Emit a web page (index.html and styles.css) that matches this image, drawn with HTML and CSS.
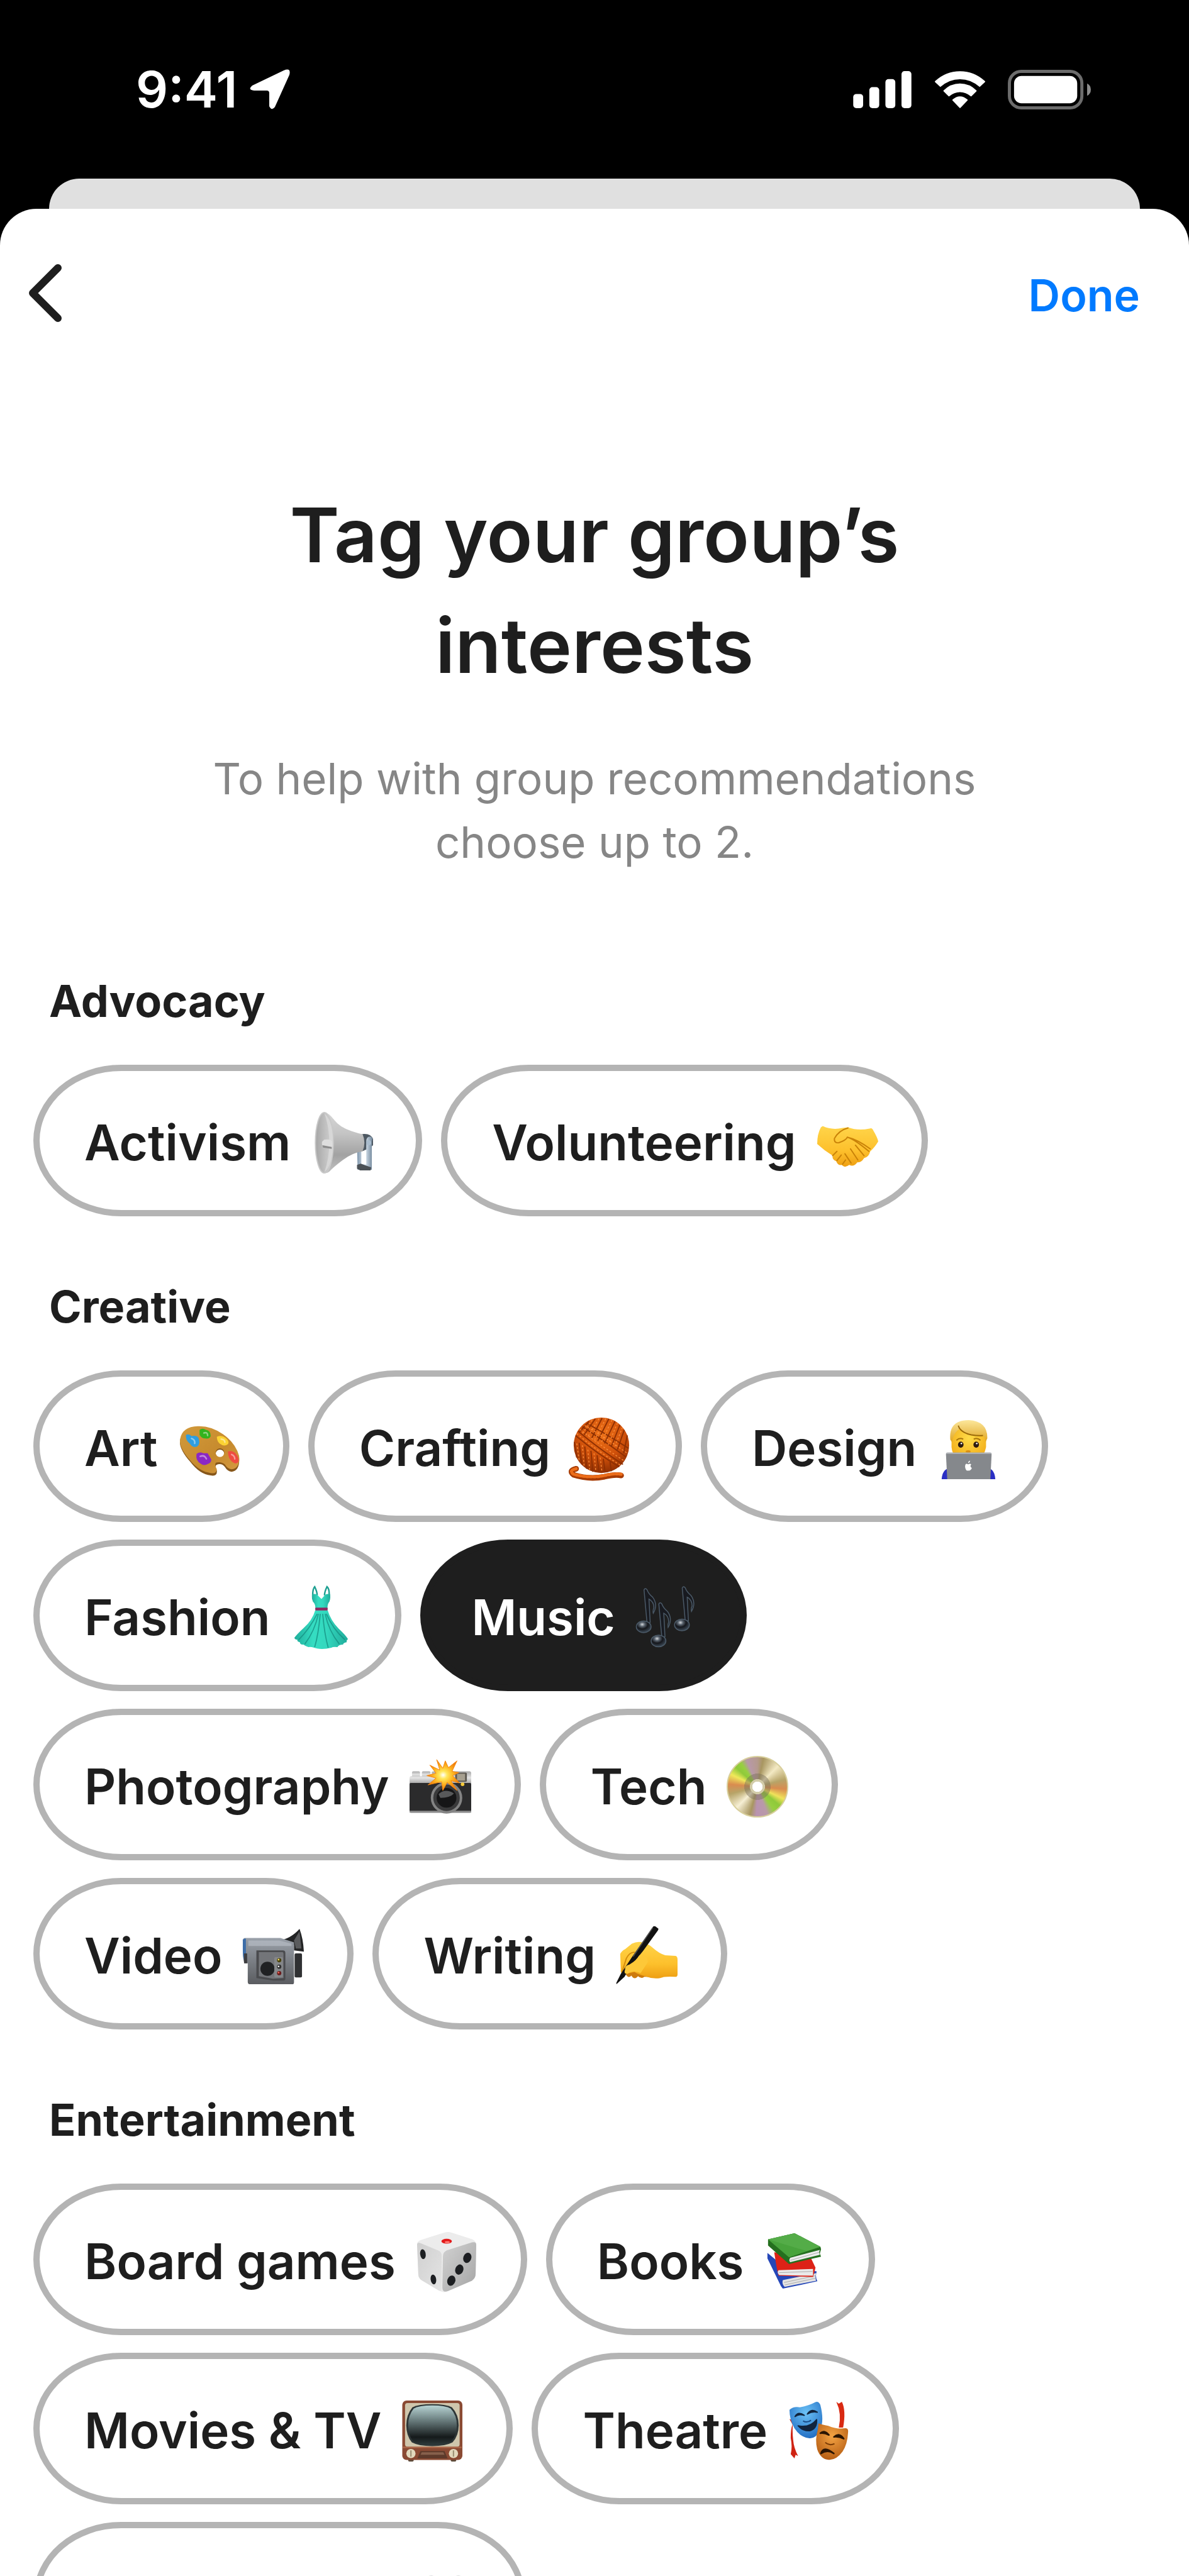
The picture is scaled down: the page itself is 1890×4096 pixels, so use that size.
FILE: index.html
```html
<!DOCTYPE html>
<html lang="en">
<head>
    <meta charset="UTF-8">
    <meta name="viewport" content="width=device-width, initial-scale=1.0">
    <title>Tag your group’s interests</title>
    <link rel="stylesheet" href="styles.css">
</head>
<body>

<div class="status-bar">
    <div class="status-left">
        <span class="time">9:41</span>
        <svg class="location" viewBox="0 0 64 64" aria-hidden="true"><path fill="#fff" d="M4 26 54 2Q66-3 63 9L40 60Q35 67 31 59V38Q31 34 27 34H7Q-4 33 4 26Z"/></svg>
    </div>
    <div class="status-right">
        <svg class="signal" viewBox="0 0 95 61" aria-hidden="true">
            <g fill="#fff">
                <rect x="0" y="38" width="16" height="23" rx="5"/>
                <rect x="26" y="27" width="16" height="34" rx="5"/>
                <rect x="52" y="14" width="16" height="47" rx="5"/>
                <rect x="78" y="1" width="16" height="60" rx="5"/>
            </g>
        </svg>
        <svg class="wifi" viewBox="0 0 84 61" aria-hidden="true">
            <g fill="#fff" stroke="#fff" stroke-width="2" stroke-linejoin="round">
                <path d="M2 18Q19 2 42 2T82 18L74 25.500Q60 13 42 13T10 25.500Z"/>
                <path d="M16 33Q27 22 42 22T68 33L60 41Q52 34 42 34T24 41Z"/>
                <path d="M30.500 48Q36 43 42 43T53.500 48L42 60Z"/>
            </g>
        </svg>
        <svg class="battery" viewBox="0 0 134 64" aria-hidden="true">
            <rect x="2.500" y="2.500" width="117" height="59" rx="19" fill="none" stroke="#6c6c6c" stroke-width="5"/>
            <rect x="10" y="10" width="102" height="44" rx="12" fill="#fff"/>
            <path d="M128 22Q134 25 134 32T128 42Z" fill="#8c8c8c"/>
        </svg>
    </div>
</div>

<div class="back-card"></div>

<main class="sheet">
    <nav class="nav">
        <button class="back" type="button" aria-label="Back">
            <svg viewBox="0 0 52 92" aria-hidden="true"><path d="M46 6 6 46 46 86" fill="none" stroke="#1e1e1e" stroke-width="12" stroke-linecap="round" stroke-linejoin="round"/></svg>
        </button>
        <button class="done" type="button">Done</button>
    </nav>

    <h1>Tag your group’s<br>interests</h1>
    <p class="intro">To help with group recommendations<br>choose up to 2.</p>

    <section>
        <h2>Advocacy</h2>
        <div class="chips">
            <button class="chip" type="button" aria-pressed="false">Activism
                <svg class="emoji" viewBox="0 0 100 100" aria-hidden="true">
                    <defs>
                        <linearGradient id="horn" x1="0" y1="0" x2="0" y2="1"><stop offset="0" stop-color="#d6d6d6"/><stop offset=".35" stop-color="#c4c4c4"/><stop offset=".7" stop-color="#a2a2a2"/><stop offset="1" stop-color="#c2c2c2"/></linearGradient>
                        <linearGradient id="bell" x1="0" y1="0" x2="1" y2="0"><stop offset="0" stop-color="#a5a5a5"/><stop offset=".5" stop-color="#bebebe"/><stop offset="1" stop-color="#d2d2d2"/></linearGradient>
                        <linearGradient id="steel" x1="0" y1="0" x2="1" y2="0"><stop offset="0" stop-color="#7d94aa"/><stop offset=".5" stop-color="#dfeaf4"/><stop offset="1" stop-color="#71879b"/></linearGradient>
                    </defs>
                    <path d="M83 36Q97 34 101 44V54L95 59 83 64Z" fill="#4d5862"/>
                    <path d="M75 55H82V85H90V48Q90 40 96 40T99 48V94H76Z" fill="url(#steel)"/>
                    <path d="M75 86 81 84 98 90 97 95H80L75 92Z" fill="#4b5156"/>
                    <circle cx="94" cy="50" r="4" fill="#a9bccd"/>
                    <path d="M22 1Q29 1 38 13T66 31Q78 35 84 36Q90 50 84 64Q68 66 52 78T30 97Q26 100 22 99Z" fill="url(#horn)"/>
                    <ellipse cx="22" cy="50" rx="14.500" ry="49" fill="url(#bell)" stroke="#c9c9c9" stroke-width="2"/>
                    <path d="M22 2Q36 14 36 50T22 98Q30 75 30 50T22 2Z" fill="#dadada" opacity=".8"/>
                    <path d="M22 45Q34 43 35 50T34 58L20 56Q15 50 22 45Z" fill="#dedede"/>
                    <path d="M19 54 34 57V60L20 58Z" fill="#8c8c8c"/>
                </svg>
            </button>
            <button class="chip" type="button" aria-pressed="false">Volunteering
                <svg class="emoji" viewBox="0 0 100 100" aria-hidden="true">
                    <defs><linearGradient id="skin" x1="0" y1="0" x2="0" y2="1"><stop offset="0" stop-color="#ffd54a"/><stop offset=".6" stop-color="#fdc02c"/><stop offset="1" stop-color="#ee9f13"/></linearGradient></defs>
                    <path d="M10 23Q25 30 42 26L51 25Q67 31 86 27Q90 25 92 30Q99 42 100 48Q94 58 87 64Q85 73 77 75Q73 82 66 82Q60 90 53 86Q45 92 41 86Q34 87 32 80Q25 78 26 71Q13 63 1 52Q1 36 7 25Z" fill="url(#skin)"/>
                    <path d="M51 26Q36 30 29 43Q28 51 36 50Q48 46 50 41Q61 44 85 64M63 54 77 71M55 60 67 78M46 68 56 83M26 71 33 64M33 79 40 70M42 85 47 78M50 41Q67 45 87 60" fill="none" stroke="#c98208" stroke-width="2" stroke-linecap="round"/>
                </svg>
            </button>
        </div>
    </section>

    <section>
        <h2>Creative</h2>
        <div class="chips">
            <button class="chip" type="button" aria-pressed="false">Art
                <svg class="emoji" viewBox="0 0 100 100" aria-hidden="true">
                    <defs><linearGradient id="wood" x1="0" y1="0" x2="1" y2="1"><stop offset="0" stop-color="#d29a3c"/><stop offset=".6" stop-color="#c68a2d"/><stop offset="1" stop-color="#d69b42"/></linearGradient></defs>
                    <path d="M3 39Q4 15 32 15Q53 13 73 27Q93 41 99 62Q101 84 87 86Q80 85 76 78Q70 71 62 75Q59 78 63 84Q64 94 53 92Q35 90 20 70Q4 52 3 39ZM68 50A7 7 0 1 0 68 64A7 7 0 1 0 68 50Z" transform="translate(0 2)" fill="#87571a" fill-rule="evenodd"/>
                    <path d="M3 39Q4 15 32 14Q53 13 73 27Q93 41 99 62Q101 82 87 84Q80 83 76 76Q70 71 62 73Q58 76 63 84Q62 92 53 90Q35 88 20 70Q4 52 3 39ZM68 50A7 7 0 1 0 68 64A7 7 0 1 0 68 50Z" fill="url(#wood)" fill-rule="evenodd"/>
                    <path d="M35 20Q40 16 45 20Q53 21 53 30Q51 35 45 34Q38 34 35 28Z" fill="#32b31d"/>
                    <path d="M13 28Q18 26 22 30Q33 28 34 36Q36 43 31 47Q24 50 19 42Q12 37 13 28Z" fill="#2f9ee0"/>
                    <path d="M63 31Q71 28 77 33Q84 39 81 43Q75 48 69 43Q63 40 63 31Z" fill="#fbd233"/>
                    <path d="M30 59Q35 55 41 58L48 58 54 68Q54 73 49 75Q42 79 37 75Q28 70 30 59Z" fill="#8b27c4"/>
                    <path d="M81 55Q88 53 93 58Q100 66 98 72Q94 77 88 72Q81 66 81 55Z" fill="#ef4b41"/>
                    <path d="M42 25Q48 23 48 29M22 34Q28 36 27 42M70 35Q76 36 76 40M36 63Q43 60 46 67M87 60Q92 62 92 67" fill="none" stroke="#fff" stroke-opacity=".45" stroke-width="2.500" stroke-linecap="round"/>
                </svg>
            </button>
            <button class="chip" type="button" aria-pressed="false">Crafting
                <svg class="emoji" viewBox="0 0 100 100" aria-hidden="true">
                    <defs><radialGradient id="yarn" cx=".5" cy=".3" r=".7"><stop offset="0" stop-color="#ee7218"/><stop offset=".6" stop-color="#cf500a"/><stop offset="1" stop-color="#8f2f02"/></radialGradient></defs>
                    <path d="M9 83Q-4 86 5 93Q30 101 55 96Q72 92 82 94" fill="none" stroke="#a63b04" stroke-width="9" stroke-linecap="round"/>
                    <path d="M9 83Q-4 86 5 92Q30 99 55 94Q72 90 82 92" fill="none" stroke="#ec6d1a" stroke-width="5" stroke-linecap="round" stroke-dasharray="3 3"/>
                    <ellipse cx="50" cy="45" rx="45" ry="45" fill="url(#yarn)"/>
                    <g fill="none" stroke="#8e3003" stroke-width="2">
                        <path d="M12 22Q45 50 85 76M8 29Q42 58 79 80M19 15Q52 36 90 64M26 9Q60 28 94 50"/>
                        <path d="M30 6 14 24M40 2 22 28M51 1 34 34M62 2 44 38M72 6 55 42M80 12 66 47M87 20 76 52M92 29 86 58"/>
                        <path d="M6 40 10 65M14 41 18 76M23 47 26 83M33 54 36 88M43 61 46 89M53 67 56 89M64 72 66 87"/>
                    </g>
                    <g fill="none" stroke="#f98a38" stroke-width="1.500" stroke-dasharray="3 3">
                        <path d="M15 19Q48 45 88 71M10 26Q44 55 82 78M23 13Q56 32 92 58"/>
                        <path d="M35 4 18 27M46 2 28 31M57 2 39 36M67 4 50 40M76 9 61 44M84 16 71 49M10 42 14 70M19 45 22 79M28 52 31 85M38 58 41 88M48 65 51 89"/>
                    </g>
                </svg>
            </button>
            <button class="chip" type="button" aria-pressed="false">Design
                <svg class="emoji" viewBox="0 0 100 100" aria-hidden="true">
                    <defs>
                        <linearGradient id="hair" x1="0" y1="0" x2="0" y2="1"><stop offset="0" stop-color="#fce79c"/><stop offset="1" stop-color="#dfa41f"/></linearGradient>
                        <radialGradient id="face" cx=".5" cy=".4" r=".6"><stop offset="0" stop-color="#ffdc48"/><stop offset="1" stop-color="#f3b01c"/></radialGradient>
                    </defs>
                    <path d="M8 100Q9 85 20 82H84Q94 85 95 100Z" fill="#2a2fc4"/>
                    <path d="M24 30Q24 10 51 10T80 30V48Q77 62 70 68H34Q25 60 24 48Z" fill="url(#face)"/>
                    <path d="M22 36Q19 4 52 4Q83 6 82 34L79 40Q79 31 74 29Q54 32 38 18Q27 24 25 40Z" fill="url(#hair)"/>
                    <path d="M35 13Q38 24 56 28Q67 30 75 29" fill="none" stroke="#9b6a0a" stroke-width="2"/>
                    <ellipse cx="39" cy="44" rx="4.500" ry="5" fill="#2d1b10"/><ellipse cx="64" cy="44" rx="4.500" ry="5" fill="#2d1b10"/>
                    <circle cx="40" cy="42" r="1.300" fill="#fff"/><circle cx="65" cy="42" r="1.300" fill="#fff"/>
                    <path d="M32 37Q37 32 43 35M60 35Q66 32 71 37" fill="none" stroke="#a8750c" stroke-width="2"/>
                    <ellipse cx="51" cy="55" rx="4" ry="2" fill="#d98e12"/>
                    <path d="M17 57H87Q89 57 89 60L87 100H17L15 60Q15 57 17 57Z" fill="#85888c"/>
                    <path d="M17 57H87Q89 57 89 59H15Q15 57 17 57Z" fill="#b3b6ba"/>
                    <path d="M51 76Q46 73 46 80Q47 87 51 86Q55 87 57 82Q53 79 56 76Q54 74 51 76ZM51 74Q51 71 54 70Q54 73 51 74Z" fill="#fff"/>
                </svg>
            </button>
            <button class="chip" type="button" aria-pressed="false">Fashion
                <svg class="emoji" viewBox="0 0 100 100" aria-hidden="true">
                    <defs><linearGradient id="dress" x1="0" y1="0" x2="1" y2="0"><stop offset="0" stop-color="#1fae9b"/><stop offset=".35" stop-color="#35ddc2"/><stop offset=".6" stop-color="#33d8be"/><stop offset="1" stop-color="#20ac9b"/></linearGradient></defs>
                    <path d="M37 20Q36 4 40 0Q44 8 44 14M63 20Q65 4 60 0Q56 8 56 14" fill="none" stroke="#1c9f91" stroke-width="2.500"/>
                    <path d="M36 12Q42 11 44 13L51 20 57 13Q60 11 65 12Q66 19 64 24Q60 29 61 36H41Q42 29 37 24Q35 19 36 12Z" fill="url(#dress)"/>
                    <path d="M41 38H61Q66 55 79 68Q90 78 94 85Q91 87 92 90Q86 91 86 94Q79 94 77 98Q70 97 67 99Q59 101 52 101Q44 101 39 99Q33 97 30 98Q24 96 22 94Q16 94 16 90Q11 89 12 86Q8 86 7 83Q11 77 22 67Q36 55 41 38Z" fill="url(#dress)"/>
                    <path d="M46 44Q40 72 24 93M49 44Q46 78 40 98M53 44Q56 78 62 99M57 44Q63 72 80 93M44 44Q32 68 14 86M59 44Q69 68 89 86" fill="none" stroke="#158d80" stroke-width="1.800" opacity=".75"/>
                    <rect x="41" y="34" width="20" height="4.500" rx="1" fill="#8c2860"/>
                </svg>
            </button>
            <button class="chip selected" type="button" aria-pressed="true">Music
                <svg class="emoji" viewBox="0 0 100 100" aria-hidden="true">
                    <defs>
                        <radialGradient id="head" cx=".4" cy=".3" r=".7"><stop offset="0" stop-color="#d7dade"/><stop offset=".25" stop-color="#59636e"/><stop offset=".55" stop-color="#14161b"/><stop offset="1" stop-color="#3d4a57"/></radialGradient>
                        <g id="note">
                            <path d="M14 5Q16 1 19 5Q21 11 28 17Q37 29 29 43Q28 39 30 34Q30 24 22 20L24 58 19 60Z" fill="#181a20" stroke="#4b5a68" stroke-width="1.500"/>
                            <ellipse cx="13.500" cy="65" rx="12" ry="9.500" fill="url(#head)" stroke="#4b5a68" stroke-width="1.500"/>
                        </g>
                    </defs>
                    <use href="#note"/>
                    <use href="#note" x="62" y="-3"/>
                    <use href="#note" x="24" y="23"/>
                </svg>
            </button>
            <button class="chip" type="button" aria-pressed="false">Photography
                <svg class="emoji" viewBox="0 0 100 100" aria-hidden="true">
                    <defs>
                        <linearGradient id="chrome" x1="0" y1="0" x2="0" y2="1"><stop offset="0" stop-color="#a9a9a9"/><stop offset=".5" stop-color="#e4e4e4"/><stop offset="1" stop-color="#9e9e9e"/></linearGradient>
                        <radialGradient id="flash"><stop offset="0" stop-color="#fff"/><stop offset=".25" stop-color="#ffe75a"/><stop offset=".6" stop-color="#fdb521"/><stop offset="1" stop-color="#f07c0c"/></radialGradient>
                    </defs>
                    <rect x="4" y="25" width="13" height="11" rx="2" fill="url(#chrome)"/>
                    <rect x="20" y="25" width="14" height="11" rx="2" fill="url(#chrome)"/>
                    <path d="M0 36Q0 33 3 33H36V27Q36 25 40 25H97Q100 25 100 28V46H0Z" fill="url(#chrome)"/>
                    <rect x="0" y="44" width="100" height="48" rx="2" fill="#2b2b2c"/>
                    <rect x="0" y="89" width="100" height="3" fill="#8d8d8d"/>
                    <rect x="74" y="27" width="19" height="15" rx="2" fill="#5e5a52"/>
                    <rect x="77" y="29" width="13" height="11" fill="#a69f8f"/>
                    <circle cx="60" cy="68" r="25.500" fill="#848484"/>
                    <circle cx="60" cy="68" r="21.500" fill="#3a3a3b"/>
                    <circle cx="60" cy="68" r="16" fill="#161617"/>
                    <path d="M47 62Q58 52 72 61Q66 68 50 68Z" fill="#6f7072" opacity=".75"/>
                    <circle cx="86" cy="46" r="3" fill="#f4c93b"/>
                    <path d="M44 6 54 20 58 8 63 19 77 8 69 25 80 27 70 32 81 44 67 40 77 56 61 43 54 56 52 42 30 47 43 36 28 32 43 28 33 15 49 23Z" fill="url(#flash)" stroke="#f5870f" stroke-width="1"/>
                </svg>
            </button>
            <button class="chip" type="button" aria-pressed="false">Tech
                <span class="emoji disc" aria-hidden="true"></span>
            </button>
            <button class="chip" type="button" aria-pressed="false">Video
                <svg class="emoji" viewBox="0 0 100 100" aria-hidden="true">
                    <defs><linearGradient id="cam" x1="0" y1="0" x2="0" y2="1"><stop offset="0" stop-color="#9aa1aa"/><stop offset=".3" stop-color="#878c93"/><stop offset="1" stop-color="#5a5c60"/></linearGradient></defs>
                    <path d="M58 25Q78 23 93 6Q99 22 100 43L84 41V32Z" fill="#232425"/>
                    <path d="M84 25 93 10 96 38 87 38Z" fill="#5a5b5d"/>
                    <rect x="85" y="46" width="12" height="39" rx="2" fill="#303133"/>
                    <path d="M4 21H62L84 28V93Q84 96 81 96H13Q9 96 9 92V62H4Q1 58 1 40V24Q2 21 4 21Z" fill="url(#cam)"/>
                    <path d="M3 22H6V61Q1 58 1 40V24Z" fill="#3d6da8"/>
                    <rect x="3" y="46" width="5" height="16" fill="#3c3c3f"/>
                    <path d="M10 25H60L80 30V34H10Z" fill="#b5bbc3" opacity=".7"/>
                    <path d="M23 41H66Q70 41 70 45V87Q70 90 67 90H50L23 86Z" fill="#4a4b4e"/>
                    <path d="M27 44H65Q67 44 67 47V86L50 87 27 83Z" fill="#737579"/>
                    <circle cx="41" cy="71" r="11.500" fill="#202123"/>
                    <rect x="52" y="52" width="14" height="33" rx="2" fill="#85878a"/>
                    <circle cx="60" cy="57" r="3.500" fill="#4a430f"/><circle cx="60" cy="67.500" r="3.500" fill="#333"/><circle cx="60" cy="78" r="3.500" fill="#6c1c1c"/>
                    <circle cx="59" cy="56" r="1.300" fill="#f5de65"/><circle cx="59" cy="67" r="1.300" fill="#fff"/><circle cx="59" cy="77" r="1.300" fill="#ff6b5b"/>
                </svg>
            </button>
            <button class="chip" type="button" aria-pressed="false">Writing
                <svg class="emoji" viewBox="0 0 100 100" aria-hidden="true">
                    <path d="M15 78Q20 88 25 82Q30 90 36 83Q42 88 46 84L76 85 60 72 22 70Z" fill="#cd7a0c"/>
                    <path d="M7 47Q9 42 15 39L26 30Q35 26 43 28Q53 30 60 37Q70 46 80 49L97 50Q100 51 100 56V80Q100 84 96 84Q78 83 72 86Q60 88 47 83Q36 80 30 76Q18 79 13 79Q7 79 8 73Z" fill="url(#skin)"/>
                    <path d="M10 76 17 54Q22 44 30 44M17 73Q15 67 21 64Q30 60 35 54" fill="none" stroke="#d38d0c" stroke-width="2" stroke-linecap="round"/>
                    <path d="M60 3Q61 1 64 2L68 5Q70 6 68 9L44 42 23 68 14 84 2 95Q0 97 1 93L8 79 26 52Z" fill="#111"/>
                    <path d="M60 4 28 51" stroke="#555" stroke-width="1.500"/>
                    <path d="M15 72Q14 66 22 64Q34 57 38 49Q50 45 52 60L40 78Q28 72 19 79Q12 80 15 72Z" fill="#fdc838"/>
                </svg>
            </button>
        </div>
    </section>

    <section>
        <h2>Entertainment</h2>
        <div class="chips">
            <button class="chip" type="button" aria-pressed="false">Board games
                <svg class="emoji" viewBox="0 0 100 100" aria-hidden="true">
                    <defs>
                        <linearGradient id="dieL" x1="0" y1="0" x2="1" y2="1"><stop offset="0" stop-color="#cfcfcf"/><stop offset="1" stop-color="#e4e4e4"/></linearGradient>
                        <linearGradient id="dieR" x1="0" y1="0" x2="1" y2="1"><stop offset="0" stop-color="#d2d2d2"/><stop offset="1" stop-color="#a5a5a5"/></linearGradient>
                    </defs>
                    <path d="M2 22Q2 17 8 15L46 3Q52 1 58 3L92 14Q98 17 98 23L97 70Q97 77 91 81L52 98Q45 102 38 97L9 80Q4 77 4 70Z" fill="#ececec"/>
                    <path d="M2 22Q3 18 7 20L36 32Q42 34 42 41V92Q42 100 37 97L9 80Q4 77 4 70Z" fill="url(#dieL)"/>
                    <path d="M44 41Q44 35 50 32L91 19Q98 17 98 23L97 70Q97 77 91 81L52 98Q43 101 43 92Z" fill="url(#dieR)"/>
                    <ellipse cx="50" cy="17" rx="8.500" ry="4" fill="#e31b1b"/><ellipse cx="51" cy="18.500" rx="4" ry="1.500" fill="#ff8b84"/>
                    <g fill="#1d1f22">
                        <ellipse cx="11.500" cy="38" rx="4.500" ry="8" transform="rotate(-8 11.500 38)"/>
                        <ellipse cx="28.500" cy="79" rx="4.500" ry="8" transform="rotate(-8 28.500 79)"/>
                        <ellipse cx="83.500" cy="44" rx="6.500" ry="8.500" transform="rotate(20 83.500 44)"/>
                        <ellipse cx="70.500" cy="63" rx="6.500" ry="8.500" transform="rotate(20 70.500 63)"/>
                        <ellipse cx="57.500" cy="81" rx="6.500" ry="8.500" transform="rotate(20 57.500 81)"/>
                    </g>
                </svg>
            </button>
            <button class="chip" type="button" aria-pressed="false">Books
                <svg class="emoji" viewBox="0 0 100 100" aria-hidden="true">
                    <path d="M6 36 28 54 86 66Q83 74 87 82L31 94 28 90 6 45Z" fill="#2547b8"/>
                    <path d="M31 80 85 69Q83 76 85 81L34 91Q29 86 31 80Z" fill="#e3e3e3"/>
                    <path d="M33 84 84 73M34 88 84 77" stroke="#a8a8a8" stroke-width="1"/>
                    <path d="M17 35 76 43 84 60 83 64 80 75 24 73 21 60Z" fill="#dd2217"/>
                    <path d="M24 64 80 62V73L25 72Q21 68 24 64Z" fill="#e9e9e9"/>
                    <path d="M25 68 79 66" stroke="#a8a8a8" stroke-width="1"/>
                    <path d="M7 14 50 4 92 26 93 30 91 37 93 42 41 54 7 24Z" fill="#256f1f"/>
                    <path d="M43 44 91 31Q89 35 91 39L43 51Q40 48 43 44Z" fill="#ededed"/>
                    <path d="M43 48 90 35" stroke="#a8a8a8" stroke-width="1"/>
                    <path d="M7 14 50 4 92 26 41 43Z" fill="#48a33c"/>
                    <path d="M7 14 50 4 92 26 70 33Z" fill="#5db350" opacity=".6"/>
                </svg>
            </button>
            <button class="chip" type="button" aria-pressed="false">Movies &amp; TV
                <svg class="emoji" viewBox="0 0 100 100" aria-hidden="true">
                    <defs><linearGradient id="crt" x1="0" y1="0" x2="0" y2="1"><stop offset="0" stop-color="#b7d3d3"/><stop offset=".35" stop-color="#6f8384"/><stop offset=".8" stop-color="#151a1b"/><stop offset="1" stop-color="#2e3a3b"/></linearGradient></defs>
                    <rect x="11" y="94" width="9" height="6" rx="2" fill="#5c4a3a"/><rect x="80" y="94" width="9" height="6" rx="2" fill="#5c4a3a"/>
                    <rect x="1.500" y="1" width="97.500" height="96.500" rx="7" fill="#8a4a33"/>
                    <rect x="6" y="5" width="88.500" height="71" rx="4" fill="#cfc6ac"/>
                    <path d="M50 7Q72 7 82 12Q93 24 93 41T83 69Q72 75 50 75T17 69Q8 58 8 41T18 12Q28 7 50 7Z" fill="#2d3536"/>
                    <path d="M50 9Q71 9 80 14Q90 25 90 41T81 67Q72 73 50 73T19 67Q11 57 11 41T20 14Q29 9 50 9Z" fill="url(#crt)"/>
                    <path d="M2 77H98" stroke="#b06a4c" stroke-width="2"/>
                    <path d="M31 83H70L75 95H26Z" fill="#5d3a2b"/>
                    <path d="M33 85H68L70 89H31Z" fill="#87604c"/>
                    <circle cx="15.500" cy="87" r="7.500" fill="#e2d9bd"/><circle cx="84.500" cy="87" r="7.500" fill="#e2d9bd"/>
                    <path d="M15.500 82V92M84.500 82V92" stroke="#978d70" stroke-width="2"/>
                </svg>
            </button>
            <button class="chip" type="button" aria-pressed="false">Theatre
                <svg class="emoji" viewBox="0 0 100 100" aria-hidden="true">
                    <defs>
                        <radialGradient id="joy" cx=".5" cy=".3" r=".7"><stop offset="0" stop-color="#6cc2f6"/><stop offset="1" stop-color="#236fc4"/></radialGradient>
                        <radialGradient id="woe" cx=".5" cy=".35" r=".7"><stop offset="0" stop-color="#f3a343"/><stop offset="1" stop-color="#b35a11"/></radialGradient>
                    </defs>
                    <path d="M3 31 9 33Q7 50 9 65 10 78 17 91L13 89 11 95 5 88Q8 76 5 62Q5 46 8 40Z" fill="#cf2313"/>
                    <path d="M79 3 83 6 88 3Q95 17 90 45H83Q88 22 79 3Z" fill="#d92a13"/>
                    <path d="M3 16Q10 10 20 12Q35 9 44 4Q50 1 53 8Q60 35 52 50Q45 64 34 62Q20 60 11 46Q3 32 3 16Z" fill="url(#joy)"/>
                    <path d="M12 27Q17 18 27 25Q18 22 12 27ZM32 23Q38 13 48 20Q40 18 32 23ZM17 42Q36 46 47 32Q48 47 36 50Q25 51 17 42Z" fill="#11243d" stroke="#11243d" stroke-width="2" stroke-linejoin="round"/>
                    <path d="M25 34Q31 38 38 33" fill="none" stroke="#194a86" stroke-width="2"/>
                    <path d="M50 38Q55 40 66 42Q80 48 94 46Q99 46 98 53Q97 72 89 84Q78 99 65 97Q53 95 48 80Q44 64 49 48Z" fill="url(#woe)"/>
                    <path d="M53 54Q60 48 67 57Q60 53 53 54ZM75 60Q84 52 91 63Q83 59 75 60ZM54 87Q58 73 75 87Q65 80 54 87Z" fill="#2b1503" stroke="#2b1503" stroke-width="2.500" stroke-linejoin="round"/>
                    <path d="M61 69Q68 75 76 71" fill="none" stroke="#7a3b05" stroke-width="2"/>
                </svg>
            </button>
            <button class="chip" type="button" aria-pressed="false">Video games
                <svg class="emoji" viewBox="0 0 100 100" aria-hidden="true">
                    <path d="M22 12Q30 8 36 14H64Q70 8 78 12Q90 16 96 60Q98 85 84 80Q76 74 66 62H34Q24 74 16 80Q2 85 4 60Q10 16 22 12Z" fill="#d5d5d8"/>
                    <path d="M21 36H27V30H33V36H39V42H33V48H27V42H21Z" fill="#555"/>
                    <circle cx="70" cy="31" r="4" fill="#3fa34d"/><circle cx="78" cy="39" r="4" fill="#d9342b"/><circle cx="62" cy="39" r="4" fill="#2f6fd0"/><circle cx="70" cy="47" r="4" fill="#f1c232"/>
                </svg>
            </button>
        </div>
    </section>
</main>

</body>
</html>
```
FILE: styles.css
```css
* {
    box-sizing: border-box;
}
body {
    margin: 0;
    height: 100vh;
    overflow: hidden;
    display: flex;
    flex-direction: column;
    background: #000;
    color: #1e1e1e;
    font-family: Inter, "Open Sans", sans-serif;
}
svg {
    display: block;
}
button {
    margin: 0;
    padding: 0;
    border: none;
    background: none;
    color: inherit;
    font-family: inherit;
    cursor: pointer;
}

/* Status bar */
.status-bar {
    display: flex;
    justify-content: space-between;
    align-items: center;
    flex-shrink: 0;
    padding: 97px 156px 97px 216px;
    color: #fff;
}
.status-left,
.status-right {
    display: flex;
    align-items: center;
}
.status-left {
    gap: 20px;
}
.status-right {
    gap: 35px;
}
.time {
    font-size: 80px;
    line-height: 90px;
    font-weight: 600;
}
.location {
    width: 64px;
    height: 64px;
}
.signal {
    width: 94px;
    height: 60px;
}
.wifi {
    width: 82px;
    height: 60px;
}
.battery {
    width: 132px;
    height: 63px;
}

/* Sheets */
.back-card {
    flex-shrink: 0;
    height: 48px;
    margin: 0 78px;
    background: #e0e0e0;
    border-radius: 48px 48px 0 0;
}
.sheet {
    flex: 1 0 auto;
    padding-top: 88px;
    background: #fff;
    border-radius: 58px 58px 0 0;
}
.nav {
    display: flex;
    justify-content: space-between;
    align-items: flex-end;
    padding: 0 78px 0 46px;
}
.back svg {
    width: 52px;
    height: 92px;
}
.done {
    font-size: 70px;
    line-height: 84px;
    font-weight: 600;
    color: #007aff;
}
h1 {
    margin: 251px 0 0;
    font-size: 120px;
    line-height: 176px;
    font-weight: 600;
    text-align: center;
}
.intro {
    margin: 73px 0 58px;
    font-size: 69px;
    line-height: 101px;
    color: #868686;
    text-align: center;
}

/* Interest chips */
section {
    padding: 102px 53px 0;
}
h2 {
    margin: 0 25px 59px;
    font-size: 70px;
    line-height: 84px;
    font-weight: 700;
}
.chips {
    display: flex;
    flex-wrap: wrap;
    gap: 28px 30px;
}
.chip {
    display: flex;
    align-items: center;
    gap: 32px;
    height: 241px;
    padding: 6px 69px 0 71px;
    border: 10px solid #b4b4b4;
    border-radius: 140px / 121px;
    font-size: 78px;
    font-weight: 600;
    white-space: nowrap;
}
.chip.selected {
    background: #1e1e1e;
    border-color: #1e1e1e;
    color: #fff;
}
.emoji {
    flex-shrink: 0;
    width: 98px;
    height: 98px;
    overflow: visible;
}
.disc {
    border: 2px solid #d8cf9c;
    border-radius: 50%;
    background:
        radial-gradient(circle closest-side, #fff 0 17%, #d3cca9 18% 25%, rgba(120, 110, 90, .45) 26% 44%, transparent 45%),
        conic-gradient(#b59a8e, #a89660 12deg, #f3e9c3 45deg, #b7a468 75deg, #d98c4f 95deg, #f0e25a 115deg, #8fc93a 130deg, #97cf40 145deg, #b99aa8 160deg, #b993b0 182deg, #a89660 195deg, #f6efd4 225deg, #b7a468 255deg, #d98c4f 275deg, #f0e95a 295deg, #8fc93a 312deg, #97cf40 325deg, #b899a8 338deg, #b59a8e);
}
```
